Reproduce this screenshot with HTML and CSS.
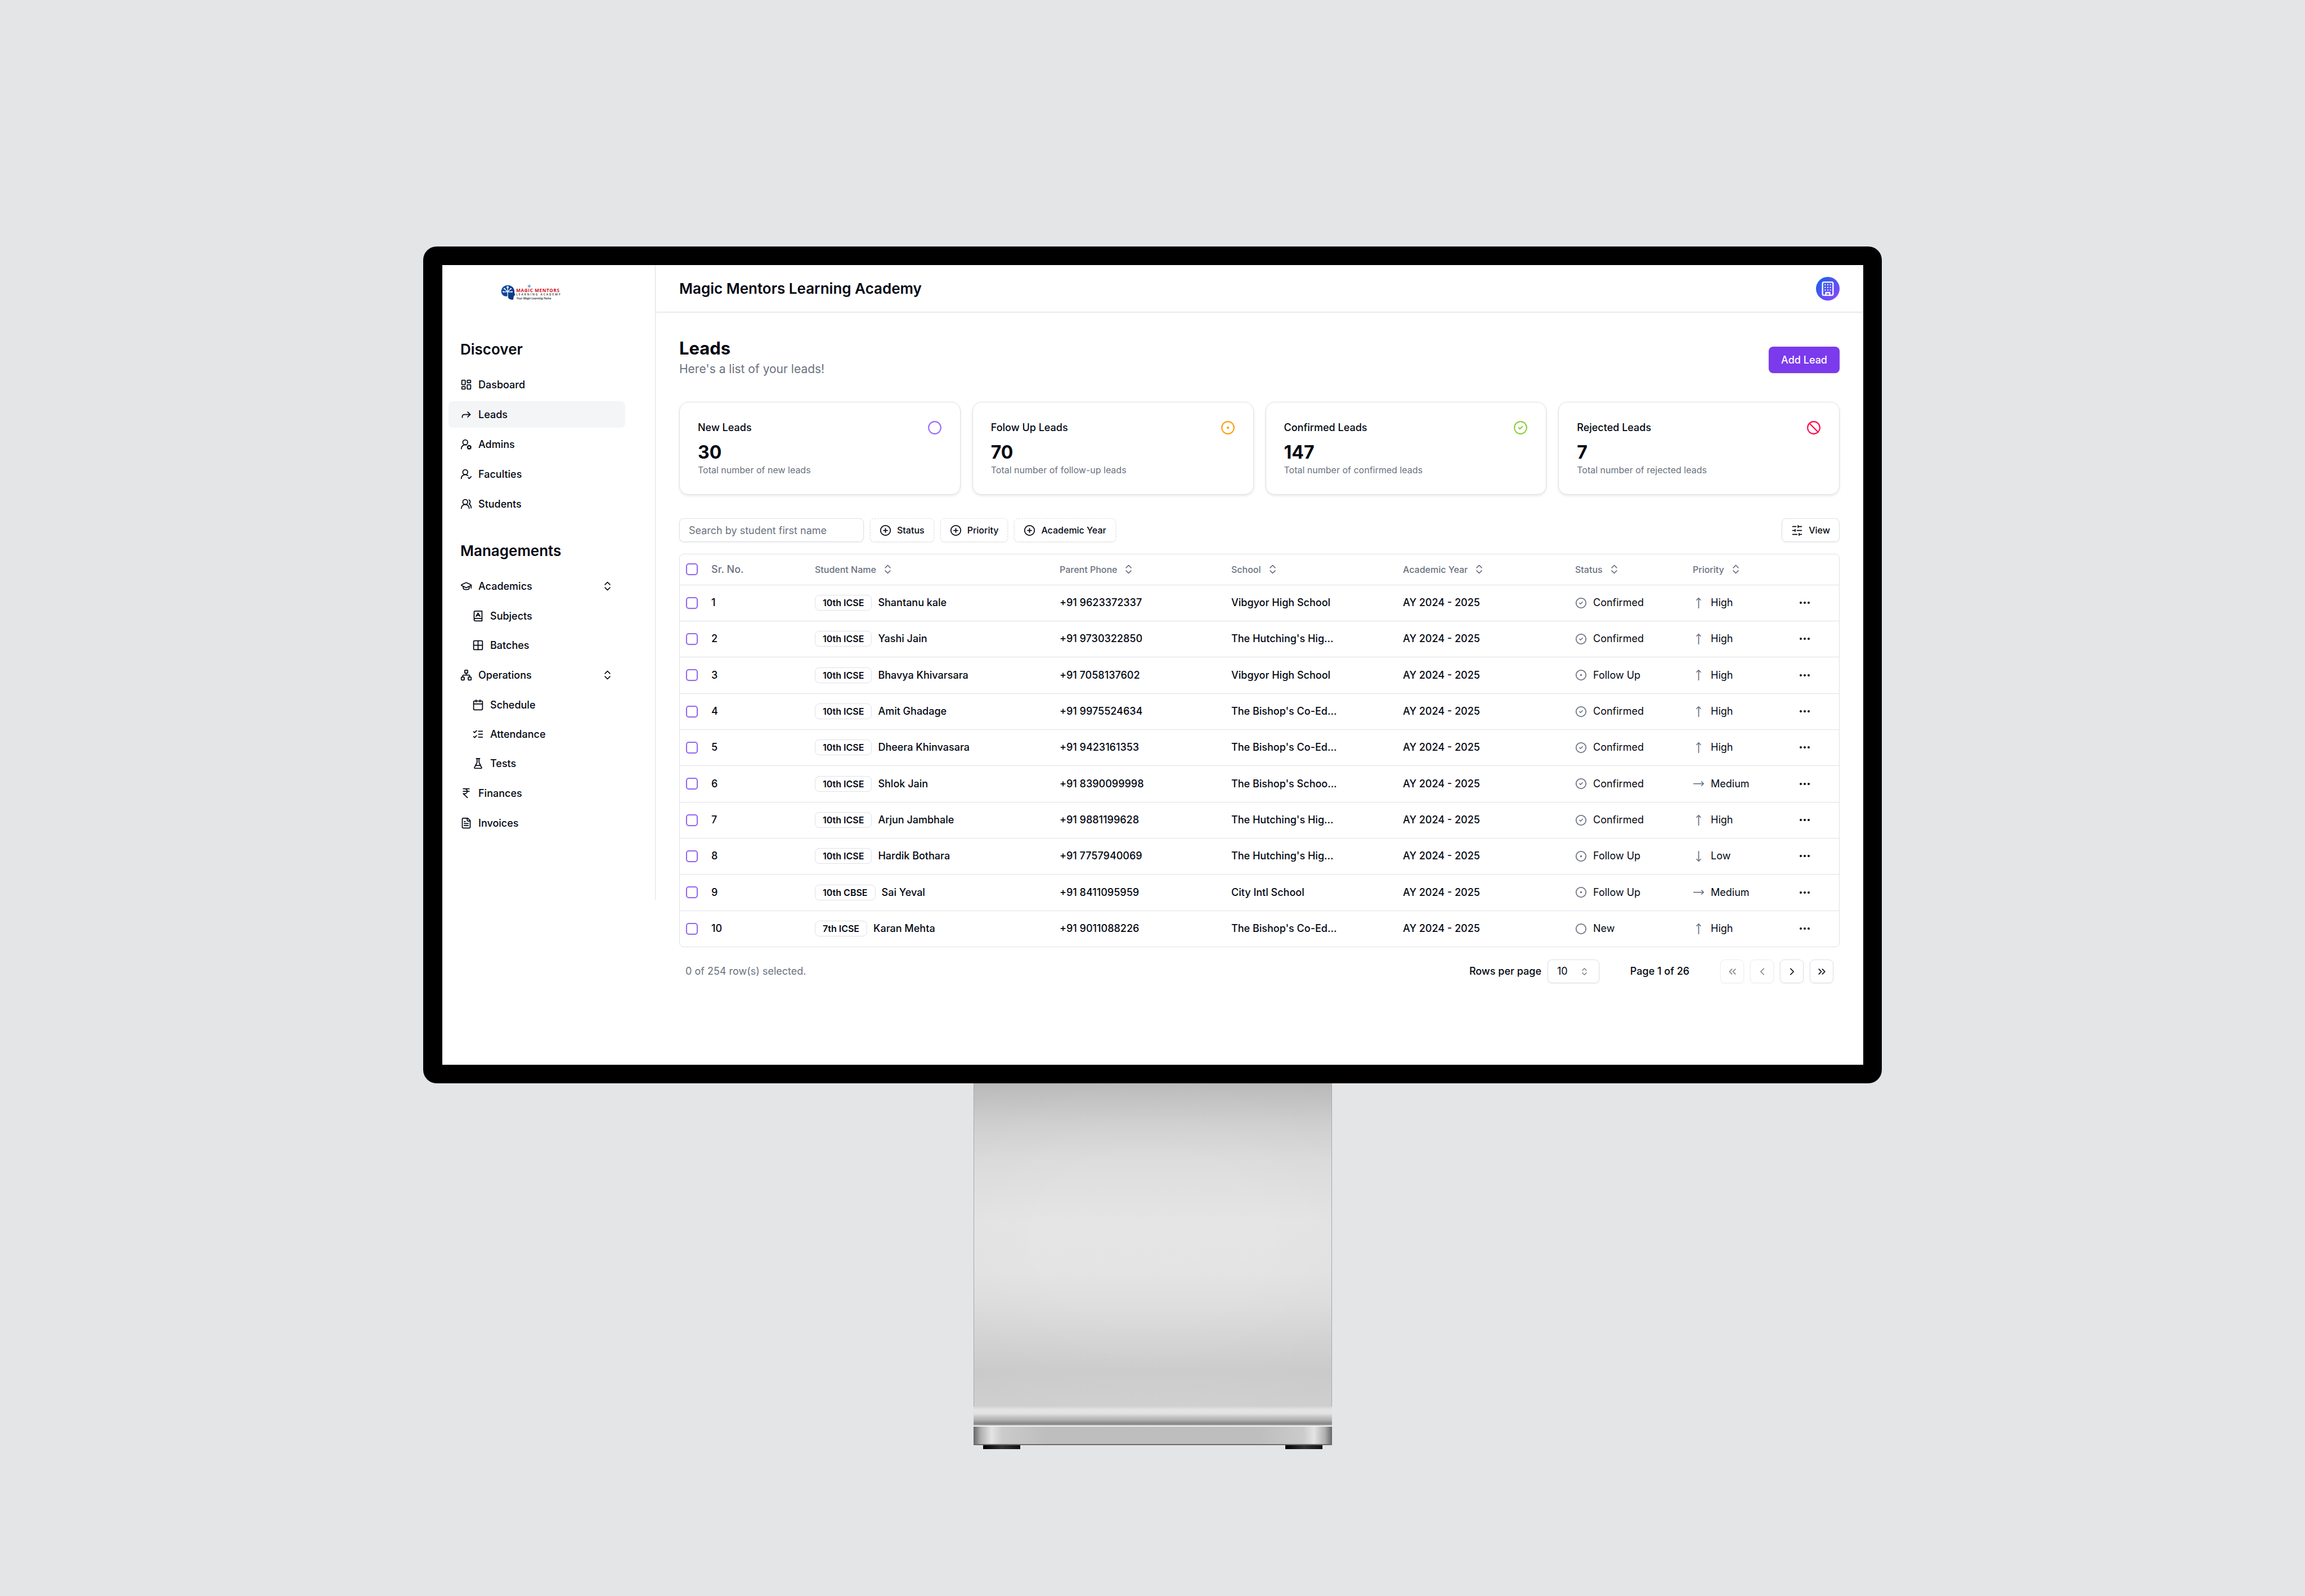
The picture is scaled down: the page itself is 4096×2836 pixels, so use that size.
FILE: index.html
```html
<!DOCTYPE html>
<html lang="en">
<head>
<meta charset="utf-8">
<title>Leads – Magic Mentors Learning Academy</title>
<link rel="stylesheet" href="styles.css">
</head>
<body>
<svg class="sprite" aria-hidden="true">
  <symbol id="i-dashboard" viewBox="0 0 24 24"><rect x="3" y="3" width="7" height="9" rx="1"/><rect x="14" y="3" width="7" height="5" rx="1"/><rect x="14" y="12" width="7" height="9" rx="1"/><rect x="3" y="16" width="7" height="5" rx="1"/></symbol>
  <symbol id="i-forward" viewBox="0 0 24 24"><path d="m15 17 5-5-5-5"/><path d="M4 18v-2a4 4 0 0 1 4-4h12"/></symbol>
  <symbol id="i-user-cog" viewBox="0 0 24 24"><path d="M2 21a8 8 0 0 1 10.434-7.62"/><circle cx="10" cy="8" r="5"/><circle cx="18" cy="18" r="3"/><path d="m19.5 14.3-.4.9M16.9 20.8l-.4.9M21.7 19.5l-.9-.4M15.2 16.9l-.9-.4M21.7 16.5l-.9.4M15.2 19.1l-.9.4M19.5 21.7l-.4-.9M16.9 15.2l-.4-.9"/></symbol>
  <symbol id="i-user-check" viewBox="0 0 24 24"><path d="M2 21a8 8 0 0 1 13.292-6"/><circle cx="10" cy="8" r="5"/><path d="m16 19 2 2 4-4"/></symbol>
  <symbol id="i-users" viewBox="0 0 24 24"><path d="M18 21a8 8 0 0 0-16 0"/><circle cx="10" cy="8" r="5"/><path d="M22 20c0-3.37-2-6.5-4-8a5 5 0 0 0-.45-8.3"/></symbol>
  <symbol id="i-cap" viewBox="0 0 24 24"><path d="M21.42 10.922a1 1 0 0 0-.019-1.838L12.83 5.18a2 2 0 0 0-1.66 0L2.6 9.08a1 1 0 0 0 0 1.832l8.57 3.908a2 2 0 0 0 1.66 0z"/><path d="M22 10v6"/><path d="M6 12.5V16a6 3 0 0 0 12 0v-3.5"/></symbol>
  <symbol id="i-book" viewBox="0 0 24 24"><path d="M4 19.5v-15A2.5 2.5 0 0 1 6.500 2H20v20H6.500a2.5 2.5 0 0 1 0-5H20"/><path d="m8 13 4-7 4 7"/><path d="M9.100 11h5.700"/></symbol>
  <symbol id="i-grid" viewBox="0 0 24 24"><rect x="3" y="3" width="18" height="18" rx="2"/><path d="M3 12h18M12 3v18"/></symbol>
  <symbol id="i-network" viewBox="0 0 24 24"><rect x="16" y="16" width="6" height="6" rx="1"/><rect x="2" y="16" width="6" height="6" rx="1"/><rect x="9" y="2" width="6" height="6" rx="1"/><path d="M5 16v-3a1 1 0 0 1 1-1h12a1 1 0 0 1 1 1v3M12 12V8"/></symbol>
  <symbol id="i-calendar" viewBox="0 0 24 24"><rect x="3" y="4" width="18" height="18" rx="2"/><path d="M3 10h18M8 2v4M16 2v4"/></symbol>
  <symbol id="i-checks" viewBox="0 0 24 24"><path d="m3 17 2 2 4-4M3 7l2 2 4-4M13 6h8M13 12h8M13 18h8"/></symbol>
  <symbol id="i-flask" viewBox="0 0 24 24"><path d="M10 2v7.527a2 2 0 0 1-.211.896L4.720 20.550a1 1 0 0 0 .9 1.450h12.760a1 1 0 0 0 .9-1.450l-5.069-10.127A2 2 0 0 1 14 9.527V2M8.500 2h7M7 16h10"/></symbol>
  <symbol id="i-rupee" viewBox="0 0 24 24"><path d="M6 3h12M6 8h12M6 13l8.500 8M6 13h3M9 13c6.667 0 6.667-10 0-10"/></symbol>
  <symbol id="i-file" viewBox="0 0 24 24"><path d="M15 2H6a2 2 0 0 0-2 2v16a2 2 0 0 0 2 2h12a2 2 0 0 0 2-2V7Z"/><path d="M14 2v4a2 2 0 0 0 2 2h4M10 9H8M16 13H8M16 17H8"/></symbol>
  <symbol id="i-sort" viewBox="0 0 24 24"><path d="m7 15 5 5 5-5M7 9l5-5 5 5"/></symbol>
  <symbol id="i-building" viewBox="0 0 24 24"><rect x="4" y="2" width="16" height="20" rx="2"/><path d="M9 22v-4h6v4M8 6h.01M16 6h.01M12 6h.01M12 10h.01M12 14h.01M16 10h.01M16 14h.01M8 10h.01M8 14h.01"/></symbol>
  <symbol id="i-circle" viewBox="0 0 24 24"><circle cx="12" cy="12" r="10"/></symbol>
  <symbol id="i-dot" viewBox="0 0 24 24"><circle cx="12" cy="12" r="10"/><circle cx="12" cy="12" r="1"/></symbol>
  <symbol id="i-check" viewBox="0 0 24 24"><circle cx="12" cy="12" r="10"/><path d="m9 12 2 2 4-4"/></symbol>
  <symbol id="i-ban" viewBox="0 0 24 24"><circle cx="12" cy="12" r="10"/><path d="m4.900 4.900 14.200 14.200"/></symbol>
  <symbol id="i-plus" viewBox="0 0 24 24"><circle cx="12" cy="12" r="10"/><path d="M8 12h8M12 8v8"/></symbol>
  <symbol id="i-sliders" viewBox="0 0 24 24"><path d="M21 4h-7M10 4H3M21 12h-9M8 12H3M21 20h-5M12 20H3M14 2v4M8 10v4M16 18v4"/></symbol>
  <symbol id="i-up" viewBox="0 0 24 24"><path d="m8 6 4-4 4 4M12 2v20"/></symbol>
  <symbol id="i-down" viewBox="0 0 24 24"><path d="m8 18 4 4 4-4M12 2v20"/></symbol>
  <symbol id="i-right" viewBox="0 0 24 24"><path d="m18 8 4 4-4 4M2 12h20"/></symbol>
  <symbol id="i-more" viewBox="0 0 24 24"><circle cx="12" cy="12" r="1"/><circle cx="19" cy="12" r="1"/><circle cx="5" cy="12" r="1"/></symbol>
  <symbol id="i-first" viewBox="0 0 24 24"><path d="m11 17-5-5 5-5M18 17l-5-5 5-5"/></symbol>
  <symbol id="i-prev" viewBox="0 0 24 24"><path d="m15 18-6-6 6-6"/></symbol>
  <symbol id="i-next" viewBox="0 0 24 24"><path d="m9 18 6-6-6-6"/></symbol>
  <symbol id="i-last" viewBox="0 0 24 24"><path d="m6 17 5-5-5-5M13 17l5-5-5-5"/></symbol>
</svg>

<div class="monitor">
  <div class="screen">
    <aside class="sidebar">
      <a class="logo" href="#" aria-label="Magic Mentors Learning Academy">
        <svg viewBox="0 0 240 90">
          <defs><linearGradient id="head" x1="0" y1="0" x2="1" y2="1"><stop offset="0" stop-color="#1257b0"/><stop offset="1" stop-color="#0a2f7d"/></linearGradient></defs>
          <path fill="url(#head)" d="M51 23c-10 0-18 8-18 18 0 6 4 11 9 13l10 1 1 5c4 3 9 5 14 4l1-9 1-1c0-1-1-2 3-2l-2-9c1-12-8-20-19-20z"/>
          <g stroke="#fff" stroke-width="2" fill="none" stroke-linecap="round"><path d="M51 29v30M39 42h24M51 42l-9-9M51 42l9-9"/></g>
          <g fill="#fff"><circle cx="51" cy="29" r="3"/><circle cx="39" cy="42" r="2"/><circle cx="63" cy="42" r="2"/><circle cx="42" cy="33" r="2"/><circle cx="60" cy="33" r="2"/></g>
          <path stroke="#2a6ab8" stroke-width="1" d="M112 21v10M107 26h10M108.500 22.500l7 7M115.500 22.500l-7 7"/>
          <text class="logo-name" x="75" y="42">MAGIC MENTORS</text>
          <text class="logo-sub" x="75" y="52">LEARNING ACADEMY</text>
          <text class="logo-tag" x="76" y="64">Your Magic Learning Home</text>
        </svg>
      </a>
      <nav class="nav">
        <section class="nav-group">
          <h2>Discover</h2>
          <ul>
            <li><a href="#"><svg class="icon"><use href="#i-dashboard"/></svg>Dasboard</a></li>
            <li><a href="#" class="active" aria-current="page"><svg class="icon"><use href="#i-forward"/></svg>Leads</a></li>
            <li><a href="#"><svg class="icon"><use href="#i-user-cog"/></svg>Admins</a></li>
            <li><a href="#"><svg class="icon"><use href="#i-user-check"/></svg>Faculties</a></li>
            <li><a href="#"><svg class="icon"><use href="#i-users"/></svg>Students</a></li>
          </ul>
        </section>
        <section class="nav-group">
          <h2>Managements</h2>
          <ul>
            <li><button type="button"><svg class="icon"><use href="#i-cap"/></svg>Academics<svg class="icon toggle"><use href="#i-sort"/></svg></button>
              <ul class="sub">
                <li><a href="#"><svg class="icon"><use href="#i-book"/></svg>Subjects</a></li>
                <li><a href="#"><svg class="icon"><use href="#i-grid"/></svg>Batches</a></li>
              </ul></li>
            <li><button type="button"><svg class="icon"><use href="#i-network"/></svg>Operations<svg class="icon toggle"><use href="#i-sort"/></svg></button>
              <ul class="sub">
                <li><a href="#"><svg class="icon"><use href="#i-calendar"/></svg>Schedule</a></li>
                <li><a href="#"><svg class="icon"><use href="#i-checks"/></svg>Attendance</a></li>
                <li><a href="#"><svg class="icon"><use href="#i-flask"/></svg>Tests</a></li>
              </ul></li>
            <li><a href="#"><svg class="icon"><use href="#i-rupee"/></svg>Finances</a></li>
            <li><a href="#"><svg class="icon"><use href="#i-file"/></svg>Invoices</a></li>
          </ul>
        </section>
      </nav>
    </aside>

    <div class="content">
      <header class="topbar">
        <h1>Magic Mentors Learning Academy</h1>
        <button type="button" class="avatar" aria-label="Account"><svg class="icon"><use href="#i-building"/></svg></button>
      </header>
      <main>
        <div class="page-head">
          <div class="page-title">
            <h2>Leads</h2>
            <p>Here's a list of your leads!</p>
          </div>
          <button type="button" class="primary">Add Lead</button>
        </div>

        <div class="cards">
          <article class="card"><div class="card-head"><h3>New Leads</h3><svg class="icon violet"><use href="#i-circle"/></svg></div><strong>30</strong><p>Total number of new leads</p></article>
          <article class="card"><div class="card-head"><h3>Folow Up Leads</h3><svg class="icon amber"><use href="#i-dot"/></svg></div><strong>70</strong><p>Total number of follow-up leads</p></article>
          <article class="card"><div class="card-head"><h3>Confirmed Leads</h3><svg class="icon green"><use href="#i-check"/></svg></div><strong>147</strong><p>Total number of confirmed leads</p></article>
          <article class="card"><div class="card-head"><h3>Rejected Leads</h3><svg class="icon red"><use href="#i-ban"/></svg></div><strong>7</strong><p>Total number of rejected leads</p></article>
        </div>

        <div class="toolbar">
          <input class="search" type="text" placeholder="Search by student first name" aria-label="Search by student first name">
          <button type="button" class="small dashed"><svg class="icon"><use href="#i-plus"/></svg>Status</button>
          <button type="button" class="small dashed"><svg class="icon"><use href="#i-plus"/></svg>Priority</button>
          <button type="button" class="small dashed"><svg class="icon"><use href="#i-plus"/></svg>Academic Year</button>
          <button type="button" class="small view"><svg class="icon"><use href="#i-sliders"/></svg>View</button>
        </div>

        <div class="table-box">
          <table>
            <colgroup><col class="c-check"><col class="c-no"><col class="c-name"><col class="c-phone"><col class="c-school"><col class="c-year"><col class="c-status"><col class="c-priority"><col class="c-more"></colgroup>
            <thead>
              <tr>
                <th><input type="checkbox" aria-label="Select all"></th>
                <th>Sr. No.</th>
                <th><button type="button" class="sort">Student Name<svg class="icon"><use href="#i-sort"/></svg></button></th>
                <th><button type="button" class="sort">Parent Phone<svg class="icon"><use href="#i-sort"/></svg></button></th>
                <th><button type="button" class="sort">School<svg class="icon"><use href="#i-sort"/></svg></button></th>
                <th><button type="button" class="sort">Academic Year<svg class="icon"><use href="#i-sort"/></svg></button></th>
                <th><button type="button" class="sort">Status<svg class="icon"><use href="#i-sort"/></svg></button></th>
                <th><button type="button" class="sort">Priority<svg class="icon"><use href="#i-sort"/></svg></button></th>
                <th></th>
              </tr>
            </thead>
            <tbody>
              <tr><td><input type="checkbox" aria-label="Select row 1"></td><td>1</td><td><div class="cell"><span class="badge">10th ICSE</span>Shantanu kale</div></td><td>+91 9623372337</td><td>Vibgyor High School</td><td>AY 2024 - 2025</td><td><div class="cell light"><svg class="icon"><use href="#i-check"/></svg>Confirmed</div></td><td><div class="cell light"><svg class="icon"><use href="#i-up"/></svg>High</div></td><td><button type="button" class="more" aria-label="Row actions"><svg class="icon"><use href="#i-more"/></svg></button></td></tr>
              <tr><td><input type="checkbox" aria-label="Select row 2"></td><td>2</td><td><div class="cell"><span class="badge">10th ICSE</span>Yashi Jain</div></td><td>+91 9730322850</td><td>The Hutching's Hig...</td><td>AY 2024 - 2025</td><td><div class="cell light"><svg class="icon"><use href="#i-check"/></svg>Confirmed</div></td><td><div class="cell light"><svg class="icon"><use href="#i-up"/></svg>High</div></td><td><button type="button" class="more" aria-label="Row actions"><svg class="icon"><use href="#i-more"/></svg></button></td></tr>
              <tr><td><input type="checkbox" aria-label="Select row 3"></td><td>3</td><td><div class="cell"><span class="badge">10th ICSE</span>Bhavya Khivarsara</div></td><td>+91 7058137602</td><td>Vibgyor High School</td><td>AY 2024 - 2025</td><td><div class="cell light"><svg class="icon"><use href="#i-dot"/></svg>Follow Up</div></td><td><div class="cell light"><svg class="icon"><use href="#i-up"/></svg>High</div></td><td><button type="button" class="more" aria-label="Row actions"><svg class="icon"><use href="#i-more"/></svg></button></td></tr>
              <tr><td><input type="checkbox" aria-label="Select row 4"></td><td>4</td><td><div class="cell"><span class="badge">10th ICSE</span>Amit Ghadage</div></td><td>+91 9975524634</td><td>The Bishop's Co-Ed...</td><td>AY 2024 - 2025</td><td><div class="cell light"><svg class="icon"><use href="#i-check"/></svg>Confirmed</div></td><td><div class="cell light"><svg class="icon"><use href="#i-up"/></svg>High</div></td><td><button type="button" class="more" aria-label="Row actions"><svg class="icon"><use href="#i-more"/></svg></button></td></tr>
              <tr><td><input type="checkbox" aria-label="Select row 5"></td><td>5</td><td><div class="cell"><span class="badge">10th ICSE</span>Dheera Khinvasara</div></td><td>+91 9423161353</td><td>The Bishop's Co-Ed...</td><td>AY 2024 - 2025</td><td><div class="cell light"><svg class="icon"><use href="#i-check"/></svg>Confirmed</div></td><td><div class="cell light"><svg class="icon"><use href="#i-up"/></svg>High</div></td><td><button type="button" class="more" aria-label="Row actions"><svg class="icon"><use href="#i-more"/></svg></button></td></tr>
              <tr><td><input type="checkbox" aria-label="Select row 6"></td><td>6</td><td><div class="cell"><span class="badge">10th ICSE</span>Shlok Jain</div></td><td>+91 8390099998</td><td>The Bishop's Schoo...</td><td>AY 2024 - 2025</td><td><div class="cell light"><svg class="icon"><use href="#i-check"/></svg>Confirmed</div></td><td><div class="cell light"><svg class="icon"><use href="#i-right"/></svg>Medium</div></td><td><button type="button" class="more" aria-label="Row actions"><svg class="icon"><use href="#i-more"/></svg></button></td></tr>
              <tr><td><input type="checkbox" aria-label="Select row 7"></td><td>7</td><td><div class="cell"><span class="badge">10th ICSE</span>Arjun Jambhale</div></td><td>+91 9881199628</td><td>The Hutching's Hig...</td><td>AY 2024 - 2025</td><td><div class="cell light"><svg class="icon"><use href="#i-check"/></svg>Confirmed</div></td><td><div class="cell light"><svg class="icon"><use href="#i-up"/></svg>High</div></td><td><button type="button" class="more" aria-label="Row actions"><svg class="icon"><use href="#i-more"/></svg></button></td></tr>
              <tr><td><input type="checkbox" aria-label="Select row 8"></td><td>8</td><td><div class="cell"><span class="badge">10th ICSE</span>Hardik Bothara</div></td><td>+91 7757940069</td><td>The Hutching's Hig...</td><td>AY 2024 - 2025</td><td><div class="cell light"><svg class="icon"><use href="#i-dot"/></svg>Follow Up</div></td><td><div class="cell light"><svg class="icon"><use href="#i-down"/></svg>Low</div></td><td><button type="button" class="more" aria-label="Row actions"><svg class="icon"><use href="#i-more"/></svg></button></td></tr>
              <tr><td><input type="checkbox" aria-label="Select row 9"></td><td>9</td><td><div class="cell"><span class="badge">10th CBSE</span>Sai Yeval</div></td><td>+91 8411095959</td><td>City Intl School</td><td>AY 2024 - 2025</td><td><div class="cell light"><svg class="icon"><use href="#i-dot"/></svg>Follow Up</div></td><td><div class="cell light"><svg class="icon"><use href="#i-right"/></svg>Medium</div></td><td><button type="button" class="more" aria-label="Row actions"><svg class="icon"><use href="#i-more"/></svg></button></td></tr>
              <tr><td><input type="checkbox" aria-label="Select row 10"></td><td>10</td><td><div class="cell"><span class="badge">7th ICSE</span>Karan Mehta</div></td><td>+91 9011088226</td><td>The Bishop's Co-Ed...</td><td>AY 2024 - 2025</td><td><div class="cell light"><svg class="icon"><use href="#i-circle"/></svg>New</div></td><td><div class="cell light"><svg class="icon"><use href="#i-up"/></svg>High</div></td><td><button type="button" class="more" aria-label="Row actions"><svg class="icon"><use href="#i-more"/></svg></button></td></tr>
            </tbody>
          </table>
        </div>

        <footer class="pager">
          <p class="selected">0 of 254 row(s) selected.</p>
          <div class="per-page">
            <label for="rows">Rows per page</label>
            <span class="select"><select id="rows"><option>10</option><option>20</option><option>50</option></select><svg class="icon"><use href="#i-sort"/></svg></span>
          </div>
          <p class="page-no">Page 1 of 26</p>
          <div class="pages">
            <button type="button" disabled aria-label="First page"><svg class="icon"><use href="#i-first"/></svg></button>
            <button type="button" disabled aria-label="Previous page"><svg class="icon"><use href="#i-prev"/></svg></button>
            <button type="button" aria-label="Next page"><svg class="icon"><use href="#i-next"/></svg></button>
            <button type="button" aria-label="Last page"><svg class="icon"><use href="#i-last"/></svg></button>
          </div>
        </footer>
      </main>
    </div>
  </div>
</div>
<div class="stand" aria-hidden="true">
  <div class="neck"></div>
  <div class="bend"></div>
  <div class="base"></div>
  <div class="feet"><span></span><span></span></div>
</div>
</body>
</html>
```
FILE: styles.css
```css
:root {
  --ink: #030712;
  --muted: #6b7280;
  --line: #dfe1e6;
  --violet: #7c3aed;
  --shadow: 0 1px 3px rgba(0, 0, 0, .08);
}
* { box-sizing: border-box; }
body {
  margin: 0;
  min-height: 100vh;
  padding: 438px 0 0;
  background: #e3e5e7;
  color: var(--ink);
  font: 400 18px/26px Inter, "Liberation Sans", sans-serif;
}
h1, h2, h3, p, ul { margin: 0; padding: 0; }
ul { list-style: none; }
a { color: inherit; text-decoration: none; }
button, input, select { font: inherit; color: inherit; margin: 0; }
button { background: none; border: 0; padding: 0; cursor: pointer; }
.sprite { display: none; }
.icon {
  width: 21px;
  height: 21px;
  flex: none;
  fill: none;
  stroke: currentColor;
  stroke-width: 2;
  stroke-linecap: round;
  stroke-linejoin: round;
}

/* Monitor */
.monitor {
  width: 63.28125%;
  margin: 0 auto;
  padding: 33px 33px 33px 34px;
  background: #000;
  border-radius: 24px;
}
.screen {
  display: flex;
  align-items: flex-start;
  background: #fff;
}

/* Sidebar */
.sidebar {
  flex: none;
  width: 379px;
  padding: 21px 53px 113px 11px;
  border-right: 1px solid var(--line);
}
.logo { display: block; padding-left: 73px; }
.logo svg { display: block; width: 151px; height: 57px; }
.logo-name { font: 700 13px "Open Sans", sans-serif; letter-spacing: 1px; fill: #d0101a; }
.logo-sub { font: 600 8px "Open Sans", sans-serif; letter-spacing: 3px; fill: #222; }
.logo-tag { font: italic 600 8px "Open Sans", sans-serif; fill: #222; }
.nav { display: grid; gap: 41px; padding-top: 53px; }
.nav h2 { padding: 0 21px; margin-bottom: 21px; font-size: 26px; line-height: 37px; font-weight: 600; }
.nav ul { display: grid; gap: 6px; }
.nav .sub { gap: 5px; margin-top: 6px; padding-left: 21px; }
.nav a, .nav button {
  display: flex;
  align-items: center;
  gap: 11px;
  width: 100%;
  height: 47px;
  padding: 0 21px;
  border-radius: 8px;
  font-weight: 500;
}
.nav .active { background: #f4f5f7; }
.nav .toggle { margin-left: auto; }

/* Top bar */
.content { flex: 1; min-width: 0; }
.topbar {
  display: flex;
  align-items: center;
  justify-content: space-between;
  height: 84px;
  padding: 0 42px;
  border-bottom: 1px solid var(--line);
  box-shadow: 0 1px 3px rgba(0, 0, 0, .05);
}
.topbar h1 { font-size: 26px; line-height: 37px; font-weight: 600; }
.avatar {
  display: grid;
  place-items: center;
  width: 42px;
  height: 42px;
  border-radius: 50%;
  background: linear-gradient(135deg, #1f5fe8 10%, #8548ff 90%);
  color: #fff;
}
.avatar .icon { width: 28px; height: 28px; }

/* Page */
main { padding: 42px 42px 145px; }
.page-head { display: flex; align-items: center; justify-content: space-between; margin-bottom: 32px; }
.page-title { padding: 1px 0 10px; }
.page-title h2 { font-size: 31px; line-height: 42px; font-weight: 700; }
.page-title p { font-size: 21px; line-height: 32px; color: var(--muted); }
.primary {
  height: 47px;
  padding: 0 22px;
  border-radius: 8px;
  background: var(--violet);
  color: #fff;
  font-weight: 500;
  box-shadow: var(--shadow);
}
.cards { display: grid; grid-template-columns: repeat(4, 1fr); gap: 21px; margin-bottom: 42px; }
.card {
  display: grid;
  padding: 32px;
  border: 1px solid var(--line);
  border-radius: 16px;
  box-shadow: 0 2px 4px rgba(0, 0, 0, .1);
}
.card-head { display: flex; align-items: center; justify-content: space-between; margin-bottom: 10px; }
.card h3 { font-size: 18px; line-height: 26px; font-weight: 500; }
.card .icon { width: 26px; height: 26px; }
.card strong { font-size: 32px; line-height: 42px; font-weight: 700; }
.card p { font-size: 16px; line-height: 21px; color: var(--muted); }
.violet { color: #9b6bff; }
.amber { color: #ff9f0a; }
.green { color: #8fce3f; }
.red { color: #ff0a4a; }

/* Toolbar */
.toolbar { display: flex; gap: 11px; margin-bottom: 21px; }
.search {
  width: 328px;
  height: 42px;
  padding: 0 16px;
  border: 1px solid var(--line);
  border-radius: 8px;
  box-shadow: var(--shadow);
  background: #fff;
}
.search::placeholder { color: var(--muted); opacity: 1; }
.small {
  display: flex;
  align-items: center;
  gap: 10px;
  height: 42px;
  padding: 0 16px;
  border: 1px solid var(--line);
  border-radius: 8px;
  box-shadow: var(--shadow);
  font-size: 16px;
  font-weight: 500;
}
.dashed { border-style: dashed; }
.view { margin-left: auto; }

/* Table */
.table-box { border: 1px solid var(--line); border-radius: 8px; }
table { width: 100%; table-layout: fixed; border-collapse: collapse; }
.c-check { width: 45px; }
.c-no { width: 184px; }
.c-name { width: 435px; }
.c-phone { width: 305px; }
.c-school { width: 305px; }
.c-year { width: 306px; }
.c-status { width: 209px; }
.c-priority { width: 178px; }
.c-more { width: 93px; }
th, td { padding: 0 11px; text-align: left; vertical-align: middle; font-weight: 500; white-space: nowrap; }
th { color: var(--muted); }
thead tr { height: 54px; }
tbody tr { height: 64px; border-top: 1px solid var(--line); }
tbody tr:nth-child(3n) { height: 65px; }
.sort { display: flex; align-items: center; gap: 10px; font-size: 16px; font-weight: 500; }
.cell { display: flex; align-items: center; gap: 11px; }
.light { font-weight: 400; }
.light .icon { color: var(--muted); }
.badge {
  padding: 0 13px;
  border: 1px solid var(--line);
  border-radius: 8px;
  font-size: 16px;
  font-weight: 600;
}
input[type="checkbox"] {
  display: block;
  appearance: none;
  width: 21px;
  height: 21px;
  border: 2px solid #9566f3;
  border-radius: 5px;
  background: #fff;
  box-shadow: var(--shadow);
}
.more { display: grid; place-items: center; width: 42px; height: 42px; }
.more .icon { width: 24px; height: 24px; }

/* Pager */
.pager { display: flex; align-items: center; gap: 42px; margin-top: 22px; padding: 0 11px; font-weight: 500; }
.selected { flex: 1; font-weight: 400; color: var(--muted); }
.per-page { display: flex; align-items: center; gap: 11px; }
.select { display: grid; align-items: center; }
.select > * { grid-area: 1 / 1; }
.select select {
  appearance: none;
  width: 92px;
  height: 42px;
  padding: 0 16px;
  border: 1px solid var(--line);
  border-radius: 8px;
  background: #fff;
  box-shadow: var(--shadow);
  font-weight: 400;
}
.select .icon { justify-self: end; width: 17px; height: 17px; margin-right: 18px; opacity: .5; pointer-events: none; }
.page-no { width: 131px; text-align: center; }
.pages { display: flex; gap: 11px; }
.pages button {
  display: grid;
  place-items: center;
  width: 42px;
  height: 42px;
  border: 1px solid var(--line);
  border-radius: 8px;
  box-shadow: var(--shadow);
}
.pages button:disabled { opacity: .5; }

/* Stand */
.stand { width: 637px; margin: 0 auto; }
.neck {
  height: 574px;
  border: solid #a8a8a8;
  border-width: 0 1px;
  background:
    radial-gradient(ellipse 75% 60% at 50% 48%, transparent 40%, rgba(0, 0, 0, .02)),
    linear-gradient(#bdbdbd, #d2d2d2 13%, #dddddd 24%, #e5e5e5 43%, #e4e4e4 58%, #dedede 69%, #d5d5d5 80%, #cecece 89%, #d3d3d3);
}
.bend {
  height: 34px;
  background: linear-gradient(#d2d2d2, #e4e4e4 18%, #e2e2e2 38%, #bdbdbd 60%, #b4b4b4 70%, #868686 90%, #ababab);
}
.base {
  height: 35px;
  border-top: 2px solid #f4f4f4;
  border-bottom: 2px solid #6b6b6b;
  background: linear-gradient(90deg, #666, #b0b0b0 2%, #e4e4e4 5%, #cbcbcb 8%, #bebebe 20%, #bebebe 80%, #cbcbcb 92%, #e4e4e4 95%, #b0b0b0 98%, #666);
}
.feet { display: flex; justify-content: space-between; padding: 0 17px; }
.feet span { width: 66px; height: 7px; background: linear-gradient(90deg, #000, #333, #111); }
```
